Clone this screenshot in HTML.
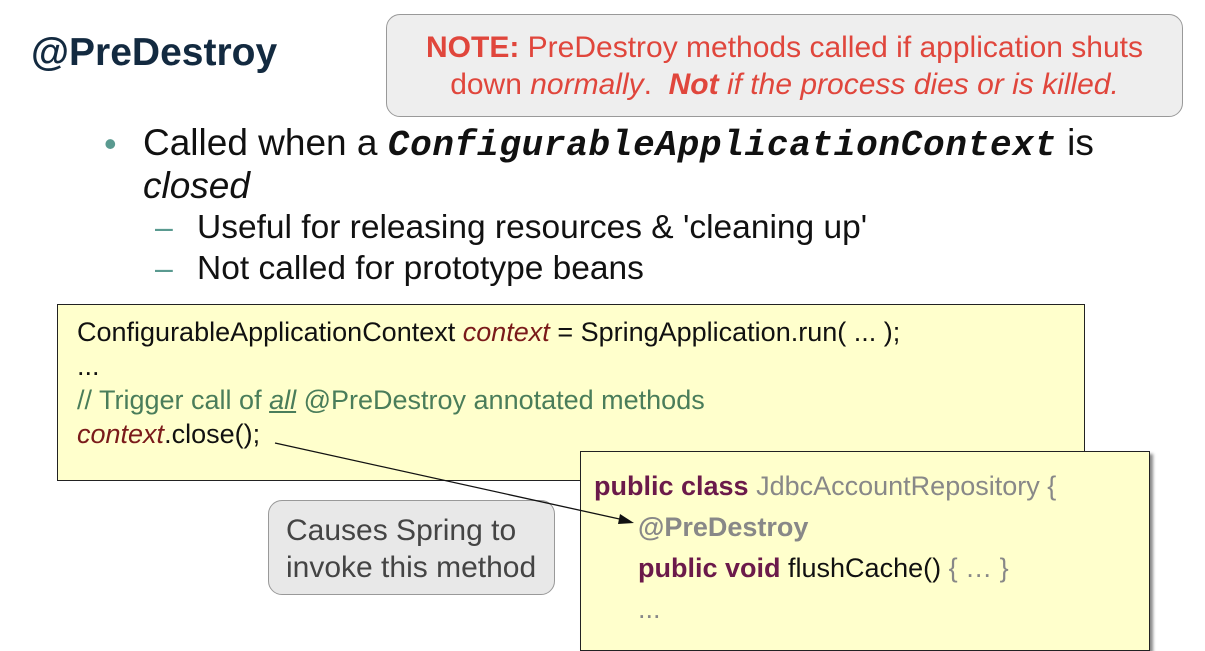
<!DOCTYPE html>
<html><head><meta charset="utf-8"><style>
body{margin:0;width:1205px;height:635px;background:#fff;position:relative;overflow:hidden;font-family:"Liberation Sans",sans-serif}
.a{position:absolute;white-space:nowrap}
.y{position:absolute;background:#ffffcc;border:1px solid #222;box-sizing:border-box}
</style></head><body>
<div class="a" style="left:31px;top:31px;font-size:39px;font-weight:bold;color:#132a40;letter-spacing:0px">@PreDestroy</div>
<div class="a" style="left:386px;top:14px;width:797px;height:103px;box-sizing:border-box;border:1px solid #999;border-radius:14px;background:#eeeeee;color:#e0463c;font-size:30px;text-align:center;line-height:37px;padding-top:14px">
<b>NOTE:</b> PreDestroy methods called if application shuts<br>down <i>normally</i>.&nbsp; <b><i>Not</i></b> <i>if the process dies or is killed.</i></div>
<div class="a" style="left:104px;top:123px;font-size:36px;color:#5a9a90">•</div>
<div class="a" style="left:143px;top:122px;font-size:37px;color:#111">Called when a <b style="font-family:'Liberation Mono',monospace;font-style:italic;font-size:36px;letter-spacing:0.7px">ConfigurableApplicationContext</b> is</div>
<div class="a" style="left:143px;top:165px;font-size:37px;color:#111;font-style:italic">closed</div>
<div class="a" style="left:155px;top:209px;font-size:32px;color:#5a9a90">–</div>
<div class="a" style="left:197px;top:209px;font-size:33.5px;color:#111">Useful for releasing resources &amp; 'cleaning up'</div>
<div class="a" style="left:155px;top:250px;font-size:32px;color:#5a9a90">–</div>
<div class="a" style="left:197px;top:250px;font-size:33.5px;color:#111">Not called for prototype beans</div>

<div class="y" style="left:57px;top:304px;width:1028px;height:177px"></div>
<div class="a" style="left:77px;top:315px;font-size:27px;line-height:34px;color:#111">ConfigurableApplicationContext <i style="color:#7a1a1a">context</i> = SpringApplication.run( ... );<br>...<br><span style="color:#4a7d5a">// Trigger call of <u><i>all</i></u> @PreDestroy annotated methods</span><br><i style="color:#7a1a1a">context</i>.close();</div>

<div class="a" style="left:268px;top:500px;width:287px;height:95px;box-sizing:border-box;border:1px solid #999;border-radius:14px;background:#e8e8e8;color:#444;font-size:30px;line-height:37px;padding:11px 0 0 17px">Causes Spring to<br>invoke this method</div>

<div class="y" style="left:580px;top:451px;width:570px;height:200px;box-shadow:3px 3px 3px #888"></div>
<div class="a" style="left:594px;top:466px;font-size:27px;line-height:41px;color:#111"><b style="color:#6b1a4a">public class</b> <span style="color:#888">JdbcAccountRepository {</span><br><span style="padding-left:44px"></span><b style="color:#888">@PreDestroy</b><br><span style="padding-left:44px"></span><b style="color:#6b1a4a">public void</b> flushCache() <span style="color:#888">{ … }</span><br><span style="padding-left:44px"></span><span style="color:#888">...</span></div>

<svg class="a" style="left:0;top:0" width="1205" height="635"><line x1="275" y1="443" x2="624" y2="520" stroke="#111" stroke-width="1.3"/><polygon points="634,523 620,514 618,524" fill="#111"/></svg>
</body></html>
